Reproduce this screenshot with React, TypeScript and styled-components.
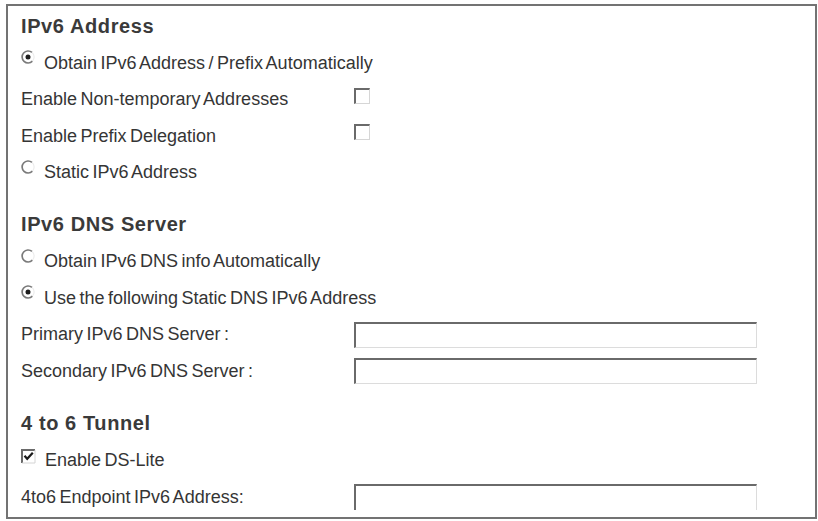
import React from "react";
import styled, { createGlobalStyle } from "styled-components";

const GlobalStyle = createGlobalStyle`
    html, body {
        margin: 0;
        padding: 0;
        background: #ffffff;
    }
    body {
        font-family: "Liberation Sans", Arial, sans-serif;
        color: #333333;
    }
`;

const Frame = styled.div<{}>`
    box-sizing: border-box;
    width: 811px;
    height: 515px;
    margin: 4px 0 0 6px;
    padding: 1px 0 0 13px;
    border: 2px solid #737373;
    display: flex;
    flex-direction: column;
    overflow: hidden;
`;

const SectionTitle = styled.div<{ $gap?: number }>`
    height: 38px;
    margin-top: ${(props) => props.$gap || 0}px;
    display: flex;
    align-items: center;
    font-size: 20px;
    font-weight: bold;
    letter-spacing: 0.6px;
    color: #3a3a3a;
`;

const Row = styled.div<{}>`
    height: 36.5px;
    display: grid;
    grid-template-columns: 333px auto;
    align-items: center;
    font-size: 18px;
    word-spacing: -1.5px;
    color: #353535;
    white-space: nowrap;
`;

const OptionLabel = styled.label<{}>`
    display: flex;
    align-items: center;
    gap: 9px;
    grid-column: 1 / 3;
`;

const Mark = styled.span<{ $lift: number }>`
    display: inline-flex;
    transform: translateY(-${(props) => props.$lift}px);
`;

const TickBox = styled.span<{}>`
    box-sizing: border-box;
    width: 16px;
    height: 16px;
    display: inline-block;
    border-top: 2px solid #6a6a6a;
    border-left: 2px solid #6a6a6a;
    border-right: 1px solid #d6d6d6;
    border-bottom: 1px solid #d6d6d6;
    transform: translateY(-4px);
`;

const TextField = styled.div<{ $open?: boolean }>`
    box-sizing: border-box;
    width: 403px;
    height: 26px;
    border-top: 2px solid #6a6a6a;
    border-left: 2px solid #6a6a6a;
    border-right: 1px solid #dcdcdc;
    border-bottom: ${(props) => (props.$open ? "none" : "1px solid #dcdcdc")};
`;

function Radio({ checked }: { checked?: boolean }) {
    return (
        <Mark $lift={6}>
            <svg width="14" height="14" viewBox="0 0 14 14">
                <path d="M11 2.4 A6 6 0 1 0 11.4 11.2" fill="none" stroke="#7a7a7a" strokeWidth="1.7" />
                <path d="M11.4 11.2 A6 6 0 0 0 11 2.4" fill="none" stroke="#ececec" strokeWidth="1.2" />
                {checked && <circle cx="7" cy="7" r="2.5" fill="#1e1e1e" />}
            </svg>
        </Mark>
    );
}

function CheckedBox() {
    return (
        <Mark $lift={4}>
            <svg width="15" height="15" viewBox="0 0 15 15">
                <path d="M1 14 V1 H14" fill="none" stroke="#6a6a6a" strokeWidth="2" />
                <path d="M14 1 V14 H1" fill="none" stroke="#d4d4d4" strokeWidth="1" />
                <path d="M3.5 6.8 L6.2 9.8 L11.8 3.8" fill="none" stroke="#1a1a1a" strokeWidth="2.2" />
            </svg>
        </Mark>
    );
}

export default function App() {
    return (
        <>
            <GlobalStyle />
            <Frame>
                <SectionTitle>IPv6 Address</SectionTitle>
                <Row>
                    <OptionLabel>
                        <Radio checked />
                        Obtain IPv6 Address / Prefix Automatically
                    </OptionLabel>
                </Row>
                <Row>
                    <span>Enable Non-temporary Addresses</span>
                    <TickBox />
                </Row>
                <Row>
                    <span>Enable Prefix Delegation</span>
                    <TickBox />
                </Row>
                <Row>
                    <OptionLabel>
                        <Radio />
                        Static IPv6 Address
                    </OptionLabel>
                </Row>

                <SectionTitle $gap={14.5}>IPv6 DNS Server</SectionTitle>
                <Row>
                    <OptionLabel>
                        <Radio />
                        Obtain IPv6 DNS info Automatically
                    </OptionLabel>
                </Row>
                <Row>
                    <OptionLabel>
                        <Radio checked />
                        Use the following Static DNS IPv6 Address
                    </OptionLabel>
                </Row>
                <Row>
                    <span>Primary IPv6 DNS Server :</span>
                    <TextField />
                </Row>
                <Row>
                    <span>Secondary IPv6 DNS Server :</span>
                    <TextField />
                </Row>

                <SectionTitle $gap={15}>4 to 6 Tunnel</SectionTitle>
                <Row>
                    <OptionLabel>
                        <CheckedBox />
                        Enable DS-Lite
                    </OptionLabel>
                </Row>
                <Row>
                    <span>4to6 Endpoint IPv6 Address:</span>
                    <TextField $open />
                </Row>
            </Frame>
        </>
    );
}
